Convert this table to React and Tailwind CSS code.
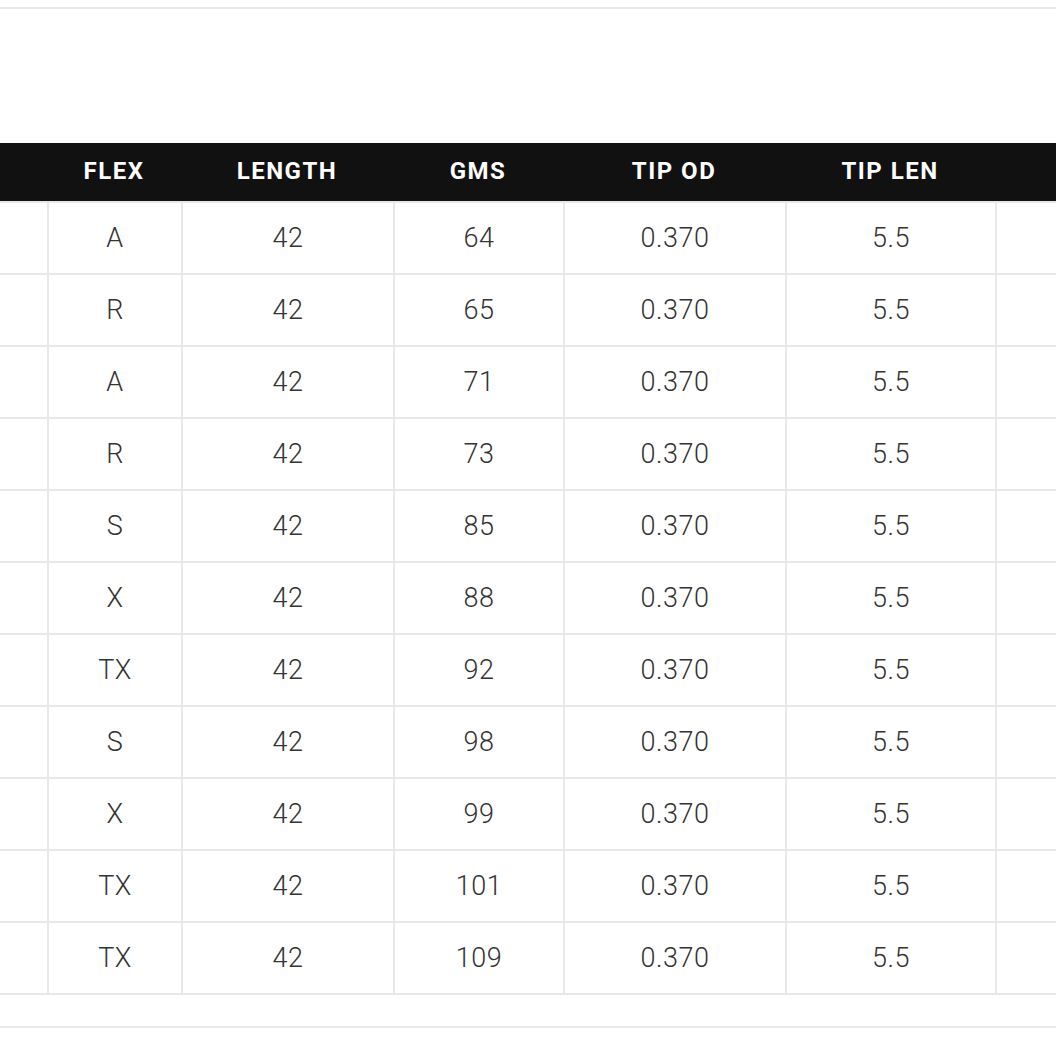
const rows = [
  ['A', '42', '64', '0.370', '5.5'],
  ['R', '42', '65', '0.370', '5.5'],
  ['A', '42', '71', '0.370', '5.5'],
  ['R', '42', '73', '0.370', '5.5'],
  ['S', '42', '85', '0.370', '5.5'],
  ['X', '42', '88', '0.370', '5.5'],
  ['TX', '42', '92', '0.370', '5.5'],
  ['S', '42', '98', '0.370', '5.5'],
  ['X', '42', '99', '0.370', '5.5'],
  ['TX', '42', '101', '0.370', '5.5'],
  ['TX', '42', '109', '0.370', '5.5'],
]

const headers = ['FLEX', 'LENGTH', 'GMS', 'TIP OD', 'TIP LEN']

// column widths line up the 2px rules at x = 47, 181, 393, 563, 785, 995
const cols = 'grid grid-cols-[47px_134px_212px_170px_222px_210px_1fr]'

export default function App() {
  return (
    <div className="w-[1056px] min-h-[1056px] bg-white overflow-hidden font-['Roboto',sans-serif]">
      <div className="mt-[7px] h-[2px] bg-[#e8e8e8]" />
      <div className="h-[134px]" />

      {/* header */}
      <div className={`${cols} h-[58px] bg-[#111111] text-white`}>
        <div />
        {headers.map((h) => (
          <div key={h} className="flex items-center justify-center pb-[3px] text-[24px] font-bold tracking-[1.5px]">
            {h}
          </div>
        ))}
        <div />
      </div>

      {/* body */}
      <div className="border-t-2 border-[#e8e8e8]">
        {rows.map((r, i) => (
          <div key={i} className={`${cols} h-[72px] border-b-2 border-[#e8e8e8]`}>
            <div />
            {r.map((v, j) => (
              <div
                key={j}
                className="flex items-center justify-center border-l-2 border-[#e8e8e8] text-[27px] font-light text-[#333333] tracking-[0.5px]"
              >
                {v}
              </div>
            ))}
            <div className="border-l-2 border-[#e8e8e8]" />
          </div>
        ))}
      </div>

      <div className="h-[31px]" />
      <div className="h-[2px] bg-[#e8e8e8]" />
    </div>
  )
}
